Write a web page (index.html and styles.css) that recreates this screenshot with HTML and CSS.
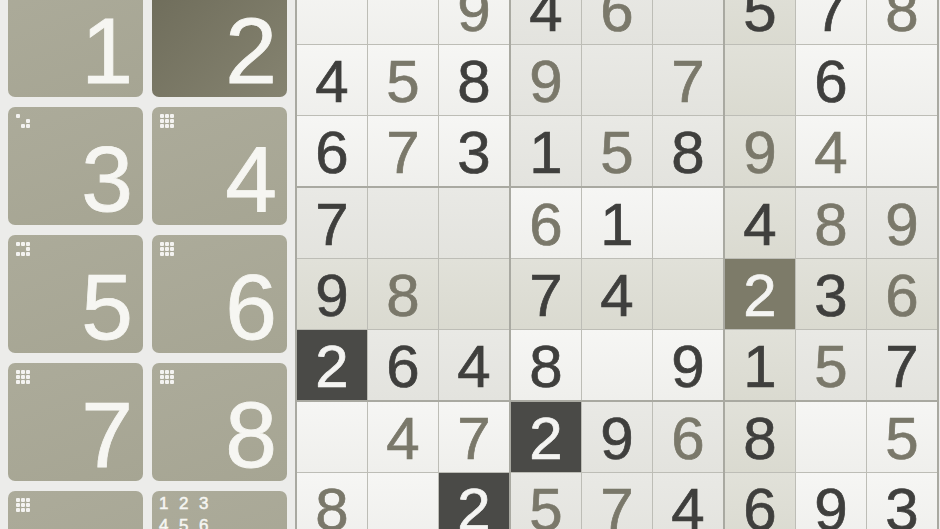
FILE: index.html
```html
<!DOCTYPE html>
<html>
<head>
<meta charset="utf-8">
<link rel="stylesheet" href="styles.css">
</head>
<body>
<div class="pad">
  <div class="key"><div class="dots"><i></i><i></i><i></i><i></i><i></i><i></i><i></i><i></i><i></i></div><span class="num">1</span></div>
  <div class="key sel"><div class="dots"><i></i><i></i><i></i><i></i><i></i><i></i><i></i><i></i><i></i></div><span class="num">2</span></div>
  <div class="key"><div class="dots"><i></i><i class="x"></i><i class="x"></i><i class="x"></i><i class="x"></i><i></i><i class="x"></i><i></i><i></i></div><span class="num">3</span></div>
  <div class="key"><div class="dots"><i></i><i></i><i></i><i></i><i></i><i></i><i></i><i></i><i></i></div><span class="num">4</span></div>
  <div class="key"><div class="dots"><i></i><i></i><i></i><i class="x"></i><i class="x"></i><i></i><i></i><i></i><i></i></div><span class="num">5</span></div>
  <div class="key"><div class="dots"><i></i><i></i><i></i><i></i><i></i><i></i><i></i><i></i><i></i></div><span class="num">6</span></div>
  <div class="key"><div class="dots"><i></i><i></i><i></i><i></i><i></i><i></i><i></i><i></i><i></i></div><span class="num">7</span></div>
  <div class="key"><div class="dots"><i></i><i></i><i></i><i></i><i></i><i></i><i></i><i></i><i></i></div><span class="num">8</span></div>
  <div class="key"><div class="dots"><i></i><i></i><i></i><i></i><i></i><i></i><i></i><i></i><i></i></div><span class="num">9</span></div>
  <div class="key notes"><div class="mini"><span>1</span><span>2</span><span>3</span><span>4</span><span>5</span><span>6</span><span>7</span><span>8</span><span>9</span></div></div>
</div>
<div class="board">
  <div class="box bw">
    <div class="c"></div><div class="c"></div><div class="c o">9</div>
    <div class="c k">4</div><div class="c o">5</div><div class="c k">8</div>
    <div class="c k">6</div><div class="c o">7</div><div class="c k">3</div>
  </div>
  <div class="box bg">
    <div class="c k">4</div><div class="c o">6</div><div class="c"></div>
    <div class="c o">9</div><div class="c"></div><div class="c o">7</div>
    <div class="c k">1</div><div class="c o">5</div><div class="c k">8</div>
  </div>
  <div class="box bw">
    <div class="c h k">5</div><div class="c k">7</div><div class="c o">8</div>
    <div class="c h"></div><div class="c k">6</div><div class="c"></div>
    <div class="c h o">9</div><div class="c o">4</div><div class="c"></div>
  </div>
  <div class="box bg">
    <div class="c k">7</div><div class="c"></div><div class="c"></div>
    <div class="c h k">9</div><div class="c h o">8</div><div class="c h"></div>
    <div class="c d">2</div><div class="c k">6</div><div class="c k">4</div>
  </div>
  <div class="box bw">
    <div class="c o">6</div><div class="c k">1</div><div class="c"></div>
    <div class="c h k">7</div><div class="c h k">4</div><div class="c h"></div>
    <div class="c k">8</div><div class="c"></div><div class="c k">9</div>
  </div>
  <div class="box bg">
    <div class="c h k">4</div><div class="c o">8</div><div class="c o">9</div>
    <div class="c s">2</div><div class="c h k">3</div><div class="c h o">6</div>
    <div class="c h k">1</div><div class="c o">5</div><div class="c k">7</div>
  </div>
  <div class="box bw">
    <div class="c"></div><div class="c o">4</div><div class="c o">7</div>
    <div class="c o">8</div><div class="c"></div><div class="c d">2</div>
    <div class="c"></div><div class="c"></div><div class="c"></div>
  </div>
  <div class="box bg">
    <div class="c d">2</div><div class="c k">9</div><div class="c o">6</div>
    <div class="c o">5</div><div class="c o">7</div><div class="c k">4</div>
    <div class="c"></div><div class="c"></div><div class="c"></div>
  </div>
  <div class="box bw">
    <div class="c h k">8</div><div class="c"></div><div class="c o">5</div>
    <div class="c h k">6</div><div class="c k">9</div><div class="c k">3</div>
    <div class="c h"></div><div class="c"></div><div class="c"></div>
  </div>
</div>
</body>
</html>
```
FILE: styles.css
```css
html, body {
  margin: 0;
  padding: 0;
}
body {
  width: 940px;
  height: 529px;
  overflow: hidden;
  background: #ececea;
  font-family: "Liberation Sans", Arial, sans-serif;
  display: flex;
  align-items: flex-start;
}
.pad {
  width: 295px;
  flex: none;
  box-sizing: border-box;
  padding: 0 8px;
  margin-top: -21px;
  display: grid;
  grid-template-columns: 135px 135px;
  grid-auto-rows: 118px;
  column-gap: 9px;
  row-gap: 10px;
}
.key {
  border-radius: 7px;
  background: linear-gradient(160deg, #acab9a, #a6a593);
  color: #f6f6f2;
  display: flex;
  flex-direction: column;
  justify-content: space-between;
  padding: 7px 10px 0 8px;
  box-sizing: border-box;
}
.key.sel {
  background: linear-gradient(135deg, #6e6c5a, #858370);
}
.dots {
  align-self: flex-start;
  display: grid;
  grid-template-columns: repeat(3, 4px);
  grid-auto-rows: 4px;
  gap: 1px;
}
.dots i {
  display: block;
  background: rgba(255, 255, 255, 0.85);
  border-radius: 1px;
}
.dots i.x {
  background: transparent;
}
.num {
  align-self: flex-end;
  font-size: 93px;
  line-height: 1;
  margin-bottom: -1px;
  -webkit-text-stroke: 0.8px currentColor;
}
.notes {
  padding: 3px 0 0 7px;
  justify-content: flex-start;
}
.mini {
  display: grid;
  grid-template-columns: repeat(3, 20px);
  grid-auto-rows: 22px;
  font-size: 17px;
  line-height: 20px;
  color: #f6f6f2;
  -webkit-text-stroke: 0.5px currentColor;
}
.board {
  flex: none;
  margin-top: -28px;
  padding: 2px;
  background: #a9a9a1;
  display: grid;
  grid-template-columns: repeat(3, 212px);
  gap: 2px;
}
.box {
  display: grid;
  grid-template-columns: repeat(3, 70px);
  grid-auto-rows: 70px;
  gap: 1px;
  background: #bdbdb6;
}
.c {
  display: flex;
  align-items: center;
  justify-content: center;
  font-size: 60px;
  line-height: 1;
  padding-top: 3px;
  box-sizing: border-box;
  -webkit-text-stroke: 0.7px currentColor;
}
.bw .c {
  background: linear-gradient(#f6f6f4, #efefec);
}
.bg .c {
  background: linear-gradient(#e9e9e5, #e3e3de);
}
.box .c.h {
  background: linear-gradient(#e1e1d9, #dadad0);
}
.box .c.d {
  background: #4a4a47;
  color: #f4f4f2;
}
.box .c.s {
  background: #7d7b69;
  color: #f4f4f2;
}
.k {
  color: #3f3f3d;
}
.o {
  color: #7a786a;
}
```
